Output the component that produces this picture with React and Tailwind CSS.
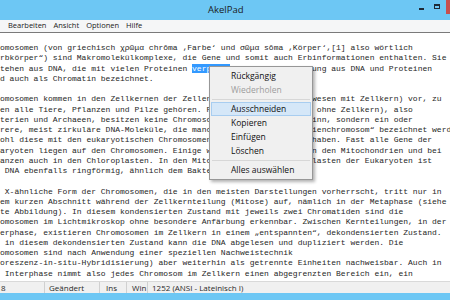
import React from "react";

const para1 = [
  "omosomen (von griechisch χρῶμα chrōma ‚Farbe‘ und σῶμα sōma ‚Körper‘,[1] also wörtlich",
  "rbkörper“) sind Makromolekülkomplexe, die Gene und somit auch Erbinformationen enthalten. Sie",
];

const para2 = [
  "omosomen kommen in den Zellkernen der Zellen von Eukaryoten (Lebewesen mit Zellkern) vor, zu",
  "en alle Tiere, Pflanzen und Pilze gehören. Prokaryoten (Lebewesen ohne Zellkern), also",
  "terien und Archaeen, besitzen keine Chromosomen im eigentlichen Sinn, sondern ein oder",
  "rere, meist zirkuläre DNA-Moleküle, die manchmal auch als „Bakterienchromosom“ bezeichnet werden,",
  "ohl diese mit den eukaryotischen Chromosomen nur wenig gemeinsam haben. Fast alle Gene der",
  "aryoten liegen auf den Chromosomen. Einige wenige befinden sich in den Mitochondrien und bei",
  "anzen auch in den Chloroplasten. In den Mitochondrien und Chloroplasten der Eukaryoten ist",
  " DNA ebenfalls ringförmig, ähnlich dem Bakterienchromosom.",
];

const para3 = [
  " X-ähnliche Form der Chromosomen, die in den meisten Darstellungen vorherrscht, tritt nur in",
  "em kurzen Abschnitt während der Zellkernteilung (Mitose) auf, nämlich in der Metaphase (siehe",
  "te Abbildung). In diesem kondensierten Zustand mit jeweils zwei Chromatiden sind die",
  "omosomen im Lichtmikroskop ohne besondere Anfärbung erkennbar. Zwischen Kernteilungen, in der",
  "erphase, existieren Chromosomen im Zellkern in einem „entspannten“, dekondensierten Zustand.",
  " in diesem dekondensierten Zustand kann die DNA abgelesen und dupliziert werden. Die",
  "omosomen sind nach Anwendung einer speziellen Nachweistechnik",
  "oreszenz-in-situ-Hybridisierung) aber weiterhin als getrennte Einheiten nachweisbar. Auch in",
  " Interphase nimmt also jedes Chromosom im Zellkern einen abgegrenzten Bereich ein, ein",
];

const menuItems = [
  { label: "Rückgängig" },
  { label: "Wiederholen", disabled: true },
  { sep: true },
  { label: "Ausschneiden", active: true },
  { label: "Kopieren" },
  { label: "Einfügen" },
  { label: "Löschen" },
  { sep: true },
  { label: "Alles auswählen" },
];

const Line = ({ children }) => (
  <div className="h-[10.25px] leading-[10.25px] whitespace-pre">{children}</div>
);

const ContextMenu = () => (
  <div className="absolute left-[209px] top-[66px] w-[104px] bg-[#f0f0f0] border border-[#979797] py-[2px] shadow-[2px_2px_3px_rgba(0,0,0,0.3)] font-['Open_Sans',sans-serif] text-[8.5px] text-[#111]">
    {menuItems.map((item, i) =>
      item.sep ? (
        <div key={i} className="h-[5px] flex items-center pl-[2px] pr-[2px]">
          <div className="h-px w-full bg-[#d7d7d7]" />
        </div>
      ) : (
        <div
          key={i}
          className={`h-[14px] flex items-center pl-[19px] mx-[1px] border ${
            item.active
              ? "bg-[#d5e7f8] border-[#a8cdf0]"
              : "border-transparent"
          } ${item.disabled ? "text-[#9d9d9d]" : ""}`}
        >
          {item.label}
        </div>
      )
    )}
  </div>
);

export default function App() {
  return (
    <div className="w-[450px] h-[300px] overflow-hidden flex flex-col bg-[#6dc7f4] relative">
      {/* title bar */}
      <div className="h-[20px] flex shrink-0">
        <div className="pl-[208px] pt-[3px] text-[9.5px] leading-[14px] text-[#1b1b1b] font-['Open_Sans',sans-serif]">
          AkelPad
        </div>
        <div className="ml-auto flex">
          <div className="w-[16px] flex justify-center pt-[8px]">
            <div className="w-[5px] h-[2px] bg-[#1f2a36]" />
          </div>
          <div className="w-[16px] flex justify-center pt-[4px] mr-[1px]">
            <div className="w-[6px] h-[5px] border border-t-2 border-[#1f2a36]" />
          </div>
          <div className="w-[4px] h-[14px] bg-[#c7504f]" />
        </div>
      </div>

      {/* menu bar */}
      <div className="h-[12px] shrink-0 bg-[#f5f6f7] flex items-center gap-[7px] pl-[8px] text-[7.5px] text-[#1a1a1a] font-['Open_Sans',sans-serif] border-b border-[#7a7a7a] box-content">
        <span>Bearbeiten</span>
        <span>Ansicht</span>
        <span>Optionen</span>
        <span>Hilfe</span>
      </div>

      {/* editor */}
      <div className="flex-1 bg-white overflow-hidden pt-[10px] font-['Liberation_Mono',monospace] text-[8px] text-[#262626]">
        {para1.map((l, i) => (
          <Line key={i}>{l}</Line>
        ))}
        <Line>
          {"tehen aus DNA, die mit vielen Proteinen "}
          <span className="bg-[#3399ff] text-white">verpackt</span>
          {" ist. Diese Mischung aus DNA und Proteinen"}
        </Line>
        <Line>d auch als Chromatin bezeichnet.</Line>
        <Line> </Line>
        {para2.map((l, i) => (
          <Line key={i}>{l}</Line>
        ))}
        <Line> </Line>
        {para3.map((l, i) => (
          <Line key={i}>{l}</Line>
        ))}
      </div>

      {/* status bar */}
      <div className="h-[12px] shrink-0 bg-[#f0f0f0] border-t border-[#d9d9d9] flex items-center text-[8px] text-[#2a2a2a] font-['Open_Sans',sans-serif] whitespace-nowrap">
        <div className="w-[45px] pl-[1px] border-r border-[#d0d0d0] h-full flex items-center">8</div>
        <div className="w-[55px] pl-[4px] border-r border-[#d0d0d0] h-full flex items-center">Geändert</div>
        <div className="w-[27px] pl-[6px] border-r border-[#d0d0d0] h-full flex items-center">Ins</div>
        <div className="w-[21px] pl-[5px] border-r border-[#d0d0d0] h-full flex items-center">Win</div>
        <div className="pl-[4px] h-full flex items-center">1252 (ANSI - Lateinisch I)</div>
      </div>

      {/* bottom frame */}
      <div className="h-[7px] shrink-0" />

      <ContextMenu />
    </div>
  );
}
